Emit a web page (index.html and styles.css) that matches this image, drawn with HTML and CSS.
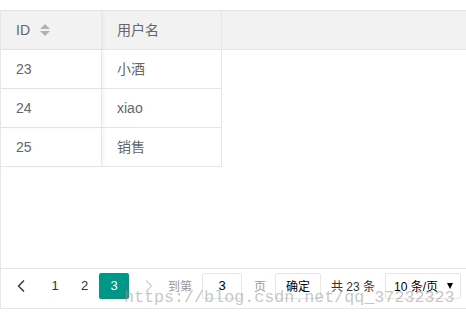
FILE: index.html
```html
<!DOCTYPE html>
<html lang="zh-CN">

<head>
      <meta charset="UTF-8">
      <meta name="viewport" content="width=device-width, initial-scale=1.0">
      <title>用户列表</title>
      <link rel="stylesheet" href="styles.css">
</head>

<body>
      <div class="page">
            <div class="table-view">
                  <div class="table-head">
                        <div class="cell cell-id">
                              <span>ID</span>
                              <svg class="sort" width="10" height="13" viewBox="0 0 10 13">
                                    <polygon points="0,5 5,0 10,5" fill="#b2b2b2" />
                                    <polygon points="0,7 10,7 5,12" fill="#b2b2b2" />
                              </svg>
                        </div>
                        <div class="cell cell-name">用户名</div>
                  </div>
                  <div class="table-body">
                        <div class="row">
                              <div class="cell cell-id">23</div>
                              <div class="cell cell-name">小酒</div>
                        </div>
                        <div class="row">
                              <div class="cell cell-id">24</div>
                              <div class="cell cell-name">xiao</div>
                        </div>
                        <div class="row">
                              <div class="cell cell-id">25</div>
                              <div class="cell cell-name">销售</div>
                        </div>
                  </div>
                  <div class="table-page">
                        <a class="pg pg-prev">
                              <svg width="8" height="12" viewBox="0 0 8 12">
                                    <polyline points="7,0.5 1.5,6 7,11.5" fill="none" stroke="#333" stroke-width="1.4" />
                              </svg>
                        </a>
                        <a class="pg pg-num pg-first">1</a>
                        <a class="pg pg-num pg-two">2</a>
                        <span class="pg pg-curr">3</span>
                        <a class="pg pg-next">
                              <svg width="8" height="12" viewBox="0 0 8 12">
                                    <polyline points="1,0.5 6.5,6 1,11.5" fill="none" stroke="#d2d2d2" stroke-width="1.4" />
                              </svg>
                        </a>
                        <span class="skip-label">到第</span>
                        <input class="skip-input" type="text" value="3">
                        <span class="skip-unit">页</span>
                        <button class="skip-btn">确定</button>
                        <span class="count">共 23 条</span>
                        <div class="limits">
                              <span>10 条/页</span>
                              <i class="caret"></i>
                        </div>
                  </div>
            </div>
            <div class="watermark">https://blog.csdn.net/qq_37232323</div>
      </div>
</body>

</html>
```

FILE: styles.css
```css
* {
      box-sizing: border-box;
      font-family: "Liberation Sans", "Noto Sans CJK SC", sans-serif;
}

body {
      margin: 0;
      padding: 0;
      overflow: hidden;
      background-color: #fff;
}

.page {
      position: relative;
      padding-top: 10px;
}

.table-view {
      border: 1px solid #e6e6e6;
      border-right: none;
}

/* header */
.table-head {
      display: flex;
      height: 39px;
      background-color: #f2f2f2;
      border-bottom: 1px solid #e6e6e6;
}

.cell {
      height: 38px;
      line-height: 38px;
      padding: 0 15px;
      font-size: 14px;
      color: #666;
      border-right: 1px solid #e6e6e6;
      white-space: nowrap;
}

.cell-id {
      display: flex;
      align-items: center;
      width: 101px;
      position: relative;
      z-index: 1;
      box-shadow: 2px 0 3px rgba(0, 0, 0, 0.04);
}

.cell-name {
      width: 120px;
}

.sort {
      margin-left: 10px;
      margin-top: 1px;
}

/* body */
.table-body {
      height: 218px;
}

.row {
      display: flex;
}

.row .cell {
      height: 39px;
      border-bottom: 1px solid #e6e6e6;
}

/* pagination */
.table-page {
      display: flex;
      align-items: center;
      height: 40px;
      padding: 0 7px 6px;
      border-top: 1px solid #e6e6e6;
      font-size: 12px;
      color: #333;
      white-space: nowrap;
}

.table-page > * {
      flex-shrink: 0;
}

.pg {
      display: flex;
      justify-content: center;
      align-items: center;
      height: 26px;
      font-size: 13px;
      color: #333;
}

.pg-prev {
      width: 26px;
}

.pg-first {
      width: 30px;
      margin-left: 6px;
}

.pg-two {
      width: 29px;
}

.pg-curr {
      width: 30px;
      color: #fff;
      background-color: #009688;
      border-radius: 2px;
}

.pg-next {
      width: 28px;
      margin-left: 6px;
}

.skip-label {
      margin-left: 5px;
      color: #999;
}

.skip-input {
      width: 40px;
      height: 26px;
      margin-left: 10px;
      border: 1px solid #e6e6e6;
      border-radius: 2px;
      outline: none;
      text-align: center;
      font-size: 13px;
      color: #000;
      padding: 0;
}

.skip-unit {
      margin-left: 12px;
      color: #999;
}

.skip-btn {
      width: 46px;
      height: 26px;
      margin-left: 9px;
      border: 1px solid #e6e6e6;
      border-radius: 2px;
      background-color: #fff;
      font-size: 12px;
      color: #000;
      padding: 0;
}

.count {
      margin-left: 10px;
      font-size: 12px;
      color: #333;
}

.limits {
      display: flex;
      align-items: center;
      justify-content: space-between;
      width: 76px;
      height: 26px;
      margin-left: 10px;
      padding: 0 7px 0 8px;
      border: 1px solid #e6e6e6;
      border-radius: 2px;
      font-size: 12px;
      color: #000;
}

.caret {
      width: 0;
      height: 0;
      border-left: 3px solid transparent;
      border-right: 3px solid transparent;
      border-top: 6px solid #000;
}

.watermark {
      position: absolute;
      left: 124px;
      top: 289px;
      font-family: "Liberation Mono", monospace;
      font-size: 16.7px;
      line-height: 17px;
      color: rgba(150, 150, 150, 0.55);
      white-space: nowrap;
      pointer-events: none;
}
```
